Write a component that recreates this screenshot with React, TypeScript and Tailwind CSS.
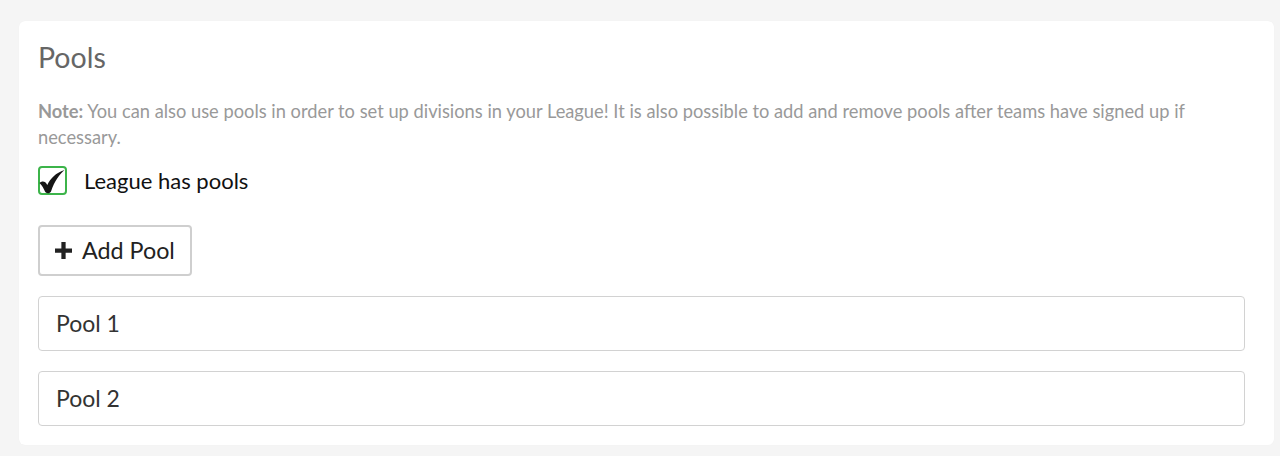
import React from "react";

export default function App() {
  return (
    <div className="min-h-[456px] bg-[#f5f5f5] pt-[21px] pl-[19px] pr-[6px] pb-[11px]" style={{ fontFamily: "Lato, 'Open Sans', sans-serif" }}>
      <div className="bg-white rounded-[6px] pl-[19px] pr-[29px] pt-[19px] pb-[19px] shadow-[0_0_1px_rgba(0,0,0,0.05)]">
        <h2 className="text-[28.5px] leading-[34px] text-[#666] font-normal">Pools</h2>
        <p className="mt-[24px] text-[18.3px] leading-[26px] text-[#999]">
          <b className="font-bold">Note:</b> You can also use pools in order to set up divisions in your League! It is also possible to add and remove pools after teams have signed up if necessary.
        </p>
        <label className="mt-[16px] flex items-center gap-[17px]">
          <span className="w-[29px] h-[29px] rounded-[4px] border-2 border-[#3cb44a] flex items-center justify-center bg-white">
            <svg width="26" height="24" viewBox="0 0 26 24" className="mt-[2px] -ml-[1px]">
              <path d="M0.5 13 C3 10.5 6.5 11 8.3 15 C11.5 8.5 16.5 3 25.5 0 C20.5 4.5 15.5 11 12 21.5 C11 23.8 7 23.9 6 21.6 C4.6 18.5 3.2 15.5 0.5 13 Z" fill="#151515" />
            </svg>
          </span>
          <span className="text-[22px] leading-[28px] text-[#111]">League has pools</span>
        </label>
        <button className="mt-[30px] h-[51px] px-[15px] flex items-center gap-[10px] border-2 border-[#cfcfcf] rounded-[4px] bg-white text-[23.3px] text-[#222]">
          <svg width="17" height="17" viewBox="0 0 16 16">
            <path d="M6 0h4v6h6v4h-6v6H6v-6H0V6h6z" fill="#222" />
          </svg>
          Add Pool
        </button>
        <div className="mt-[20px] flex flex-col gap-[20px]">
          <div className="h-[55px] border border-[#d2d2d2] rounded-[4px] flex items-center pl-[17px] text-[23px] text-[#333]">Pool 1</div>
          <div className="h-[55px] border border-[#d2d2d2] rounded-[4px] flex items-center pl-[17px] text-[23px] text-[#333]">Pool 2</div>
        </div>
      </div>
    </div>
  );
}
